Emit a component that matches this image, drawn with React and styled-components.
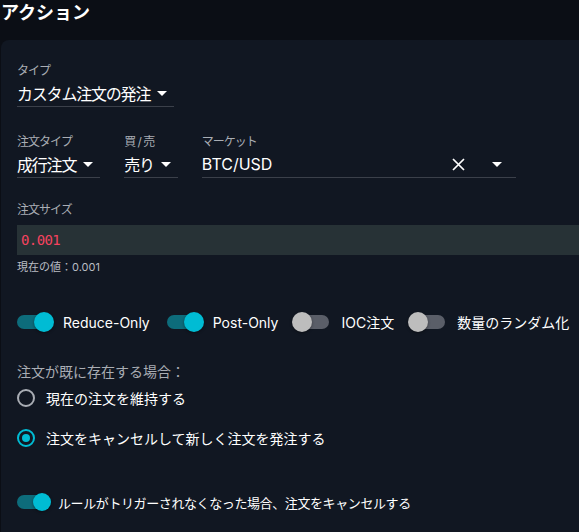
import React from "react";
import styled, { createGlobalStyle } from "styled-components";

const GlobalStyle = createGlobalStyle`
  html, body {
    margin: 0;
    padding: 0;
    background: #0b0e15;
    color: #fff;
    font-family: Inter, "Noto Sans CJK JP", sans-serif;
    overflow: hidden;
  }
`;

const Page = styled.div`
  width: 579px;
  height: 532px;
  overflow: hidden;
`;

const Title = styled.h2`
  margin: 0;
  font-size: 18px;
  font-weight: 700;
  line-height: 26px;
  padding-left: 1px;
`;

const Panel = styled.div`
  margin: 14px 0 0 1px;
  background: #111722;
  border-radius: 8px 0 0 0;
  padding: 23px 0 40px 16px;
  min-height: 520px;
`;

const Field = styled.div`
  display: flex;
  flex-direction: column;
  align-items: flex-start;
`;

const Label = styled.div`
  font-size: 12px;
  line-height: 16px;
  letter-spacing: -1px;
  color: #a9adb4;
  margin-bottom: 1px;
`;

const SelectBox = styled.div`
  display: flex;
  align-items: center;
  justify-content: ${(p) => (p.$wide ? "space-between" : "flex-start")};
  gap: 7px;
  height: 27px;
  width: ${(p) => (p.$wide ? "314px" : "auto")};
  box-sizing: border-box;
  padding-right: ${(p) => (p.$wide ? "14px" : "7px")};
  border-bottom: 1px solid #3b404a;
  font-size: 16px;
  color: #fff;
`;

const Ja = styled.span`
  letter-spacing: -1.2px;
`;

const Icons = styled.div`
  display: flex;
  align-items: center;
  gap: 27px;
`;

const Row = styled.div`
  display: flex;
  gap: 24px;
  margin-top: ${(p) => p.$mt || 0}px;
`;

const Arrow = () => (
  <svg width="10" height="5" viewBox="0 0 10 5">
    <path d="M0 0 L10 0 L5 5 Z" fill="#fff" />
  </svg>
);

const Clear = () => (
  <svg width="13" height="13" viewBox="0 0 13 13">
    <path d="M1 1 L12 12 M12 1 L1 12" stroke="#fff" strokeWidth="1.7" />
  </svg>
);

const SizeBlock = styled.div`
  margin-top: 24px;
`;

const Input = styled.div`
  margin-top: 7px;
  height: 30px;
  background: #273236;
  display: flex;
  align-items: center;
  padding-left: 4px;
  font-family: "DejaVu Sans Mono", "Liberation Mono", monospace;
  font-size: 14px;
  letter-spacing: -0.6px;
  color: #f4435f;
`;

const Helper = styled.div`
  margin-top: 4px;
  font-size: 11px;
  line-height: 16px;
  color: #b9bcc2;
`;

const SwitchRow = styled.div`
  display: flex;
  align-items: center;
  white-space: nowrap;
  margin-top: ${(p) => p.$mt || 0}px;
  margin-left: -12px;
`;

const SwitchLabel = styled.label`
  display: flex;
  align-items: center;
  flex: none;
  white-space: nowrap;
  margin-right: ${(p) => (p.$small ? 0 : 16)}px;
  & + & {
    margin-left: -11px;
  }
  font-size: ${(p) => (p.$small ? 13 : 14)}px;
  letter-spacing: ${(p) => (p.$small ? "-0.4px" : "normal")};
  color: #fff;
`;

const SwitchRoot = styled.span`
  position: relative;
  display: inline-block;
  width: ${(p) => (p.$small ? 53 : 58)}px;
  height: 38px;
  flex: none;
`;

const Track = styled.span`
  position: absolute;
  left: 12px;
  top: 12px;
  width: ${(p) => (p.$small ? 32 : 34)}px;
  height: 14px;
  border-radius: 7px;
  background: ${(p) => (p.$on ? "#0d6c7b" : "#5a5e68")};
`;

const Thumb = styled.span`
  position: absolute;
  top: ${(p) => (p.$small ? 10 : 9)}px;
  left: ${(p) => (p.$on ? (p.$small ? 28 : 29) : 9)}px;
  width: ${(p) => (p.$small ? 18 : 20)}px;
  height: ${(p) => (p.$small ? 18 : 20)}px;
  border-radius: 50%;
  background: ${(p) => (p.$on ? "#00bcd4" : "#bdbdbd")};
  box-shadow: 0 1px 3px rgba(0, 0, 0, 0.4);
`;

const Switch = ({ on, small, children }) => (
  <SwitchLabel $small={small}>
    <SwitchRoot $small={small}>
      <Track $on={on} $small={small} />
      <Thumb $on={on} $small={small} />
    </SwitchRoot>
    {children}
  </SwitchLabel>
);

const Question = styled.div`
  margin-top: 21px;
  font-size: 14px;
  line-height: 20px;
  color: #a9adb4;
`;

const RadioGroup = styled.div`
  margin-top: -4px;
`;

const RadioRow = styled.div`
  display: flex;
  align-items: center;
  gap: 11px;
  height: 40px;
  font-size: 14px;
  color: #fff;
`;

const RadioCircle = styled.span`
  width: 18px;
  height: 18px;
  box-sizing: border-box;
  border-radius: 50%;
  border: 2px solid ${(p) => (p.$on ? "#00bcd4" : "#a9adb4")};
  display: flex;
  align-items: center;
  justify-content: center;
  &::after {
    content: "";
    width: 8px;
    height: 8px;
    border-radius: 50%;
    background: #00bcd4;
    display: ${(p) => (p.$on ? "block" : "none")};
  }
`;

export default function App() {
  return (
    <Page>
      <GlobalStyle />
      <Title>アクション</Title>
      <Panel>
        <Field>
          <Label>タイプ</Label>
          <SelectBox>
            <Ja>カスタム注文の発注</Ja>
            <Arrow />
          </SelectBox>
        </Field>

        <Row $mt={27}>
          <Field>
            <Label>注文タイプ</Label>
            <SelectBox>
              <Ja>成行注文</Ja>
              <Arrow />
            </SelectBox>
          </Field>
          <Field>
            <Label>買 / 売</Label>
            <SelectBox>
              <Ja>売り</Ja>
              <Arrow />
            </SelectBox>
          </Field>
          <Field>
            <Label>マーケット</Label>
            <SelectBox $wide>
              BTC/USD
              <Icons>
                <Clear />
                <Arrow />
              </Icons>
            </SelectBox>
          </Field>
        </Row>

        <SizeBlock>
          <Label>注文サイズ</Label>
          <Input>0.001</Input>
          <Helper>現在の値：0.001</Helper>
        </SizeBlock>

        <SwitchRow $mt={28}>
          <Switch on>Reduce-Only</Switch>
          <Switch on>Post-Only</Switch>
          <Switch>IOC注文</Switch>
          <Switch>数量のランダム化</Switch>
        </SwitchRow>

        <Question>注文が既に存在する場合：</Question>
        <RadioGroup>
          <RadioRow>
            <RadioCircle />
            現在の注文を維持する
          </RadioRow>
          <RadioRow>
            <RadioCircle $on />
            注文をキャンセルして新しく注文を発注する
          </RadioRow>
        </RadioGroup>

        <SwitchRow $mt={25}>
          <Switch on small>
            ルールがトリガーされなくなった場合、注文をキャンセルする
          </Switch>
        </SwitchRow>
      </Panel>
    </Page>
  );
}
